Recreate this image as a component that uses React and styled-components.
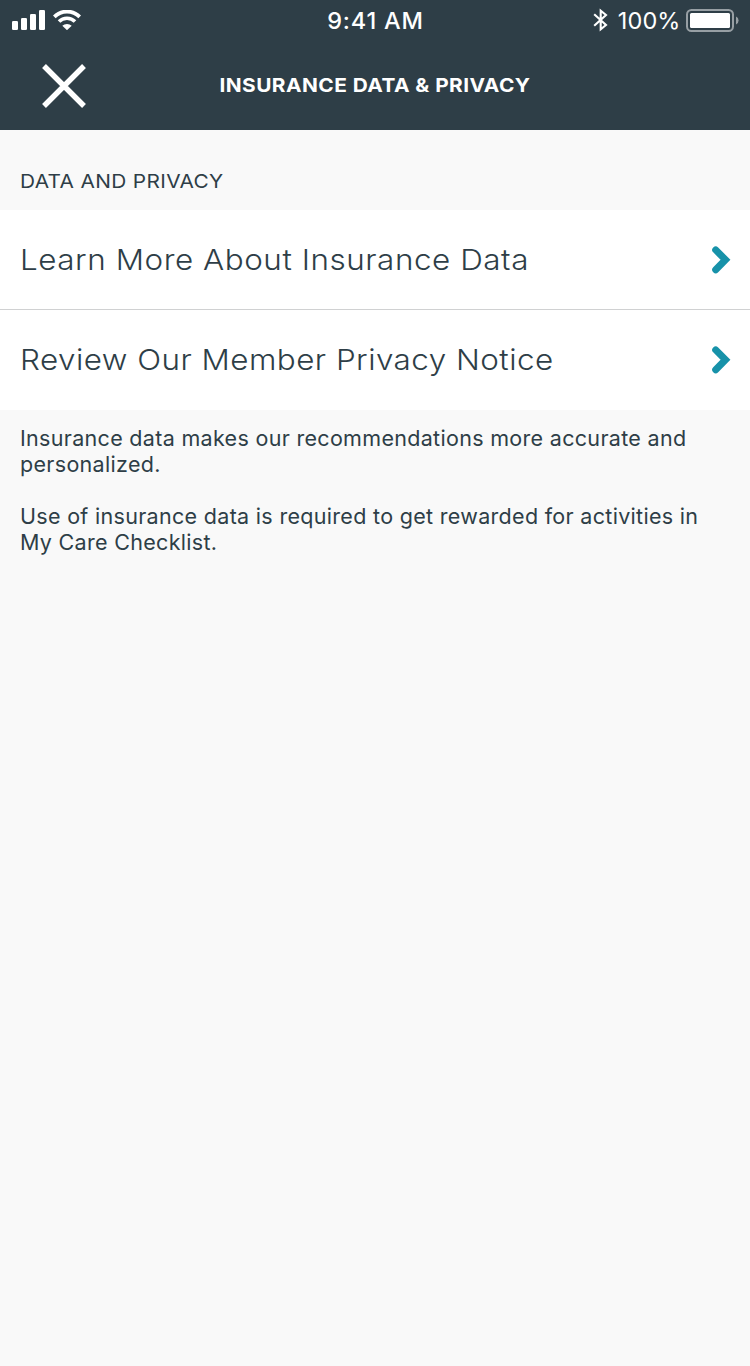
import React from "react";
import styled, { createGlobalStyle } from "styled-components";

const GlobalStyle = createGlobalStyle`
  * { box-sizing: border-box; }
  body { margin: 0; background: #f9f9f9; }
`;

const Screen = styled.div`
  width: 750px;
  min-height: 1366px;
  background: #f9f9f9;
  color: #2e3e47;
  font-family: Inter, "Liberation Sans", sans-serif;
`;

const Header = styled.header`
  height: 130px;
  background: #2e3e47;
  color: #fff;
`;

const StatusBar = styled.div`
  display: grid;
  grid-template-columns: 1fr auto 1fr;
  grid-template-rows: 40px;
  align-items: center;
  padding: 0 11px 0 12px;
`;

const StatusGroup = styled.div`
  display: flex;
  align-items: center;
  gap: ${(p) => p.$gap}px;
  justify-content: ${(p) => (p.$end ? "flex-end" : "flex-start")};
  svg { display: block; flex: none; }
`;

const Clock = styled.time`
  height: 40px;
  font-size: 23.5px;
  line-height: 42px;
  font-weight: 500;
  letter-spacing: 0.8px;
`;

const Percent = styled.span`
  height: 40px;
  margin-left: 4px;
  font-size: 23.5px;
  line-height: 42px;
  letter-spacing: 0.1px;
`;

const NavBar = styled.div`
  display: grid;
  grid-template-columns: 128px 1fr 128px;
  align-items: center;
  height: 90px;
`;

const CloseButton = styled.button`
  width: 44px;
  height: 44px;
  margin: 2px 0 0 42px;
  padding: 0;
  border: 0;
  background: none;
  color: inherit;
  svg { display: block; }
`;

const Title = styled.h1`
  margin: 0;
  text-align: center;
  font-size: 19.3px;
  line-height: 24px;
  font-weight: 700;
  letter-spacing: 0.42px;
  white-space: nowrap;
  transform: scaleX(1.08);
`;

const SectionHeader = styled.div`
  display: flex;
  align-items: flex-start;
  height: 80px;
  padding: 39px 20px 0;
`;

const SectionHeading = styled.h2`
  margin: 0;
  font-size: 19.3px;
  line-height: 24px;
  font-weight: 400;
  letter-spacing: 0.32px;
  transform: scaleX(1.08);
  transform-origin: left;
`;

const List = styled.nav`
  background: #fff;
`;

const Row = styled.a`
  display: flex;
  align-items: center;
  justify-content: space-between;
  height: 100px;
  padding: 0 19px 0 20px;
  border-bottom: ${(p) => (p.$divided ? "1px solid #d0d1d2" : "0")};
  color: inherit;
  text-decoration: none;
`;

const RowLabel = styled.span`
  font-size: 29px;
  line-height: 40px;
  font-weight: 300;
  letter-spacing: ${(p) => p.$tracking}px;
  white-space: nowrap;
  transform: scaleX(1.083);
  transform-origin: left;
`;

const Notes = styled.div`
  padding: 15px 20px;
`;

const Note = styled.p`
  margin: 0 0 26px;
  font-size: 21.5px;
  line-height: 26px;
  letter-spacing: 0.31px;
`;

const Signal = () => (
  <svg width="33" height="20" viewBox="0 0 33 20" fill="currentColor">
    <rect x="0" y="11" width="6" height="9" rx="1.3" />
    <rect x="9" y="8" width="6" height="12" rx="1.3" />
    <rect x="18" y="4" width="6" height="16" rx="1.3" />
    <rect x="27" y="0" width="6" height="20" rx="1.3" />
  </svg>
);

const Wifi = () => (
  <svg width="28" height="20" viewBox="0 0 28 20" fill="none" stroke="currentColor">
    <path d="M1.3 6.8a18 18 0 0 1 25.4 0" strokeWidth="3.8" />
    <path d="M6 11.6a11.3 11.3 0 0 1 16 0" strokeWidth="3.6" />
    <path d="M9.3 15.8a6.8 6.8 0 0 1 9.4 0L14 20.2Z" fill="currentColor" stroke="none" />
  </svg>
);

const Bluetooth = () => (
  <svg width="15" height="24" viewBox="0 0 15 24" fill="none" stroke="currentColor" strokeWidth="2.1">
    <path d="M1.2 6.2 13 17 7.7 21.3V2.7L13 7 1.2 17.8" />
  </svg>
);

const Battery = () => (
  <svg width="53" height="24" viewBox="0 0 53 24">
    <rect x="1" y="2" width="46" height="21" rx="4.5" fill="none" stroke="#979fa4" strokeWidth="2" />
    <rect x="4" y="5" width="40" height="15" rx="1.5" fill="#fff" />
    <path d="M50 8.5q2.6 1.2 2.6 4t-2.6 4Z" fill="#979fa4" />
  </svg>
);

const Close = () => (
  <svg width="44" height="44" viewBox="0 0 44 44" fill="none" stroke="currentColor" strokeWidth="5.4">
    <path d="M2 2 42 42M42 2 2 42" />
  </svg>
);

const Chevron = () => (
  <svg width="20" height="28" viewBox="0 0 20 28" fill="none" stroke="#1792a9" strokeWidth="7" strokeLinecap="round">
    <path d="M4.7 3.9 14.5 13.8 4.7 23.7" />
  </svg>
);

const rows = [
  { label: "Learn More About Insurance Data", tracking: 0.5 },
  { label: "Review Our Member Privacy Notice", tracking: 0.43 },
];

export default function App() {
  return (
    <Screen>
      <GlobalStyle />
      <Header>
        <StatusBar>
          <StatusGroup $gap={8}><Signal /><Wifi /></StatusGroup>
          <Clock>9:41 AM</Clock>
          <StatusGroup $gap={5.5} $end><Bluetooth /><Percent>100%</Percent><Battery /></StatusGroup>
        </StatusBar>
        <NavBar>
          <CloseButton aria-label="Close"><Close /></CloseButton>
          <Title>INSURANCE DATA &amp; PRIVACY</Title>
        </NavBar>
      </Header>
      <SectionHeader>
        <SectionHeading>DATA AND PRIVACY</SectionHeading>
      </SectionHeader>
      <List>
        {rows.map((row, i) => (
          <Row key={row.label} $divided={i < rows.length - 1}>
            <RowLabel $tracking={row.tracking}>{row.label}</RowLabel>
            <Chevron />
          </Row>
        ))}
      </List>
      <Notes>
        <Note>Insurance data makes our recommendations more accurate and personalized.</Note>
        <Note>Use of insurance data is required to get rewarded for activities in My Care Checklist.</Note>
      </Notes>
    </Screen>
  );
}
